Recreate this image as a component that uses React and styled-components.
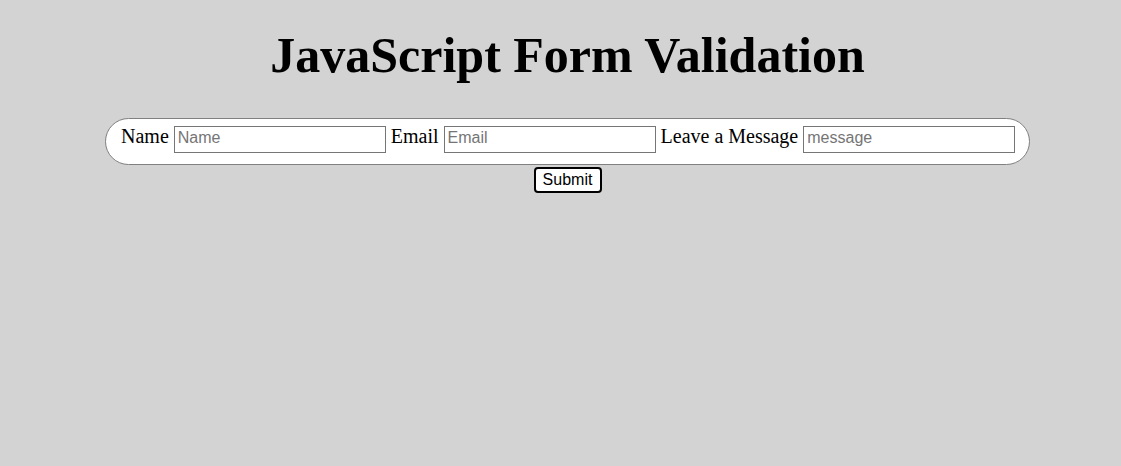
import React from "react";
import styled, { createGlobalStyle } from "styled-components";

const Global = createGlobalStyle`
  html, body { margin: 0; padding: 0; background: #d3d3d3; }
  body { font-family: "Liberation Serif", "Times New Roman", serif; }
`;

const Page = styled.div`
  padding: 0 8px 0 22px;
  display: flex;
  flex-direction: column;
  align-items: center;
`;

const Title = styled.h1`
  margin: 26px 0 0;
  font-family: "Liberation Serif", "Times New Roman", serif;
  font-weight: bold;
  font-size: 50px;
  line-height: 58px;
  color: #000;
`;

const Form = styled.form`
  display: flex;
  flex-direction: column;
  align-items: center;
  margin-top: 34px;
  gap: 2px;
`;

const Pill = styled.div`
  box-sizing: border-box;
  width: 925px;
  height: 47px;
  display: flex;
  align-items: baseline;
  padding: 6px 14px 0 15px;
  background: #fff;
  border: 1px solid #808080;
  border-radius: 24px;
  font-size: 20px;
  color: #000;
`;

const Label = styled.label`
  margin: 0 5px 0 ${(p) => (p.$first ? "0" : "5px")};
  line-height: 22px;
  white-space: nowrap;
`;

const Input = styled.input`
  box-sizing: border-box;
  width: 212px;
  height: 27px;
  padding: 0 3px 2px;
  border: 1px solid #767676;
  border-radius: 0;
  font-family: "Liberation Sans", Arial, sans-serif;
  font-size: 16px;
  color: #000;
  background: #fff;
  outline: none;
  &::placeholder { color: #757575; }
`;

const Submit = styled.button`
  box-sizing: border-box;
  width: 68px;
  height: 26px;
  padding: 0;
  background: #fff;
  border: 2px solid #000;
  border-radius: 4px;
  font-family: "Liberation Sans", Arial, sans-serif;
  font-size: 16px;
  color: #000;
  cursor: pointer;
`;

export default function App() {
  return (
    <>
      <Global />
      <Page>
        <Title>JavaScript Form Validation</Title>
        <Form onSubmit={(e) => e.preventDefault()}>
          <Pill>
            <Label $first htmlFor="n">Name</Label>
            <Input id="n" placeholder="Name" />
            <Label htmlFor="e">Email</Label>
            <Input id="e" placeholder="Email" />
            <Label htmlFor="m">Leave a Message</Label>
            <Input id="m" placeholder="message" />
          </Pill>
          <Submit type="submit">Submit</Submit>
        </Form>
      </Page>
    </>
  );
}
